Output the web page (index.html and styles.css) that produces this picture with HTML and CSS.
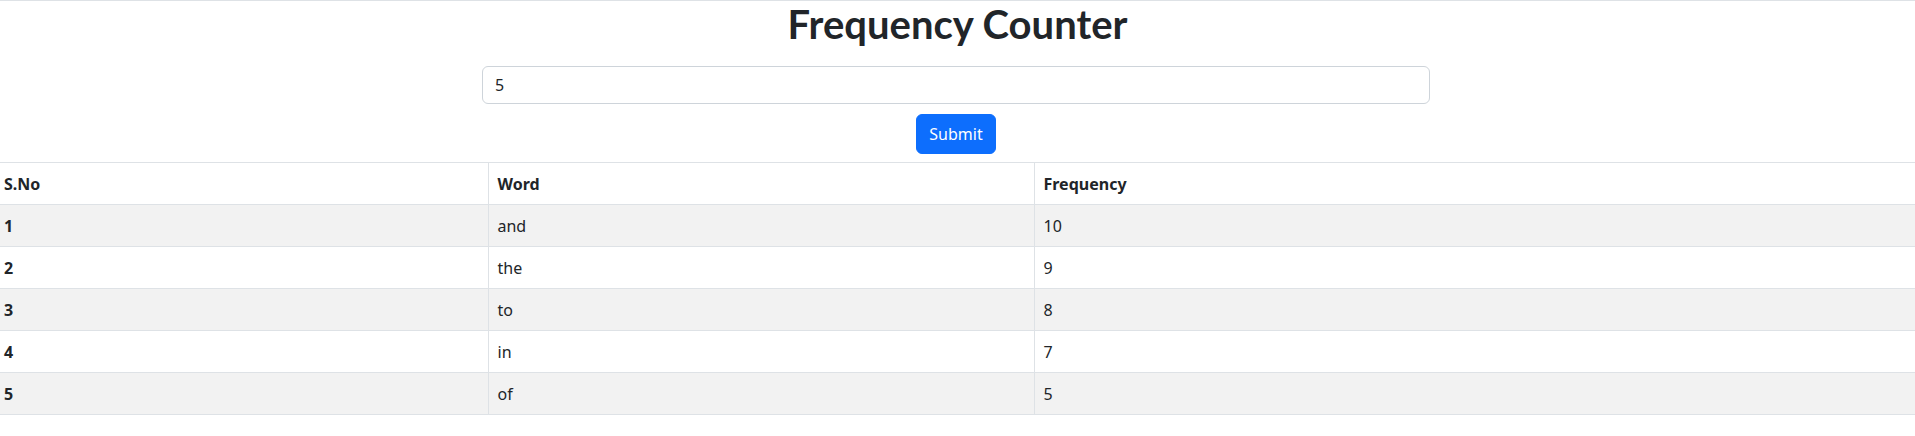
FILE: index.html
```html
<!DOCTYPE html>
<html lang="en">
<head>
<meta charset="utf-8">
<title>Frequency Counter</title>
<link rel="stylesheet" href="styles.css">
</head>
<body>
<div class="app">
  <h1 class="title">Frequency Counter</h1>
  <form class="form">
    <input class="input" type="text" value="5">
    <button class="btn" type="button">Submit</button>
  </form>
  <table class="table">
    <thead>
      <tr><th class="c1">S.No</th><th class="c2">Word</th><th class="c3">Frequency</th></tr>
    </thead>
    <tbody>
      <tr class="odd"><th class="c1">1</th><td class="c2">and</td><td class="c3">10</td></tr>
      <tr><th class="c1">2</th><td class="c2">the</td><td class="c3">9</td></tr>
      <tr class="odd"><th class="c1">3</th><td class="c2">to</td><td class="c3">8</td></tr>
      <tr><th class="c1">4</th><td class="c2">in</td><td class="c3">7</td></tr>
      <tr class="odd"><th class="c1">5</th><td class="c2">of</td><td class="c3">5</td></tr>
    </tbody>
  </table>
</div>
</body>
</html>
```
FILE: styles.css
```css
html, body {
  margin: 0;
  padding: 0;
  background: #fff;
}
body {
  font-family: "Segoe UI", "Noto Sans", "Liberation Sans", sans-serif;
  font-size: 16px;
  color: #212529;
}
.app {
  border-top: 1px solid #dee2e6;
}
.title {
  margin: 0;
  height: 48px;
  line-height: 46px;
  text-align: center;
  font-family: "Lato", sans-serif;
  font-weight: 700;
  font-size: 40px;
  color: #212529;
}
.form {
  display: flex;
  flex-direction: column;
  align-items: center;
  margin: 17px 0 0;
}
.input {
  box-sizing: border-box;
  width: 948px;
  height: 38px;
  margin-left: -3px;
  padding: 6px 12px;
  border: 1px solid #ced4da;
  border-radius: 6px;
  font-family: inherit;
  font-size: 16px;
  color: #212529;
  outline: none;
}
.btn {
  box-sizing: border-box;
  margin-top: 10px;
  margin-left: -3px;
  width: 80px;
  height: 40px;
  border: 1px solid #0d6efd;
  border-radius: 6px;
  background: #0d6efd;
  color: #fff;
  font-family: inherit;
  font-size: 16px;
  padding: 0;
}
.table {
  margin-top: 8px;
  width: 100%;
  border-collapse: collapse;
  border-top: 1px solid #dee2e6;
}
.table th, .table td {
  box-sizing: border-box;
  height: 42px;
  padding: 8px 9px;
  text-align: left;
  vertical-align: middle;
  border-bottom: 1px solid #dee2e6;
  line-height: 24px;
}
.table th {
  font-weight: 700;
}
.table td {
  font-weight: 400;
}
.c1 {
  width: 488px;
  padding-left: 4px !important;
}
.c2 {
  width: 546px;
  border-left: 1px solid #dee2e6;
}
.c3 {
  border-left: 1px solid #dee2e6;
}
.odd th, .odd td {
  background: #f2f2f2;
}
```
